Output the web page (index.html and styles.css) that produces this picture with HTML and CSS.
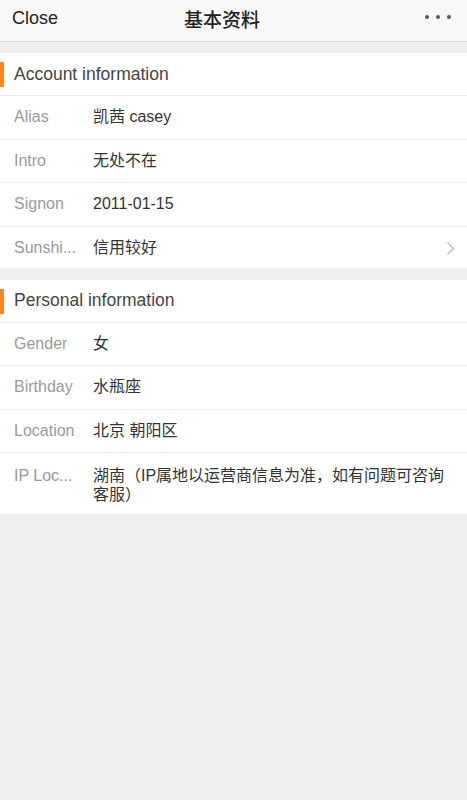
FILE: index.html
```html
<!DOCTYPE html>
<html>
<head>
    <title>基本资料</title>
    <link rel="stylesheet" href="styles.css">
</head>
<body>

    <div class="topbar">
        <span class="close">Close</span>
        <span class="title">基本资料</span>
        <span class="more"><i></i><i></i><i></i></span>
    </div>

    <div class="group">
        <div class="group-title">Account information</div>
        <div class="row">
            <span class="label">Alias</span>
            <span class="value">凯茜 casey</span>
        </div>
        <div class="row">
            <span class="label">Intro</span>
            <span class="value">无处不在</span>
        </div>
        <div class="row">
            <span class="label">Signon</span>
            <span class="value">2011-01-15</span>
        </div>
        <div class="row">
            <span class="label">Sunshi...</span>
            <span class="value">信用较好</span>
            <svg class="arrow" width="9" height="15" viewBox="0 0 9 15">
                <path d="M1.5 1.5 L7.5 7.5 L1.5 13.5" fill="none" stroke="#b8b8b8" stroke-width="1.3"/>
            </svg>
        </div>
    </div>

    <div class="group">
        <div class="group-title">Personal information</div>
        <div class="row">
            <span class="label">Gender</span>
            <span class="value">女</span>
        </div>
        <div class="row">
            <span class="label">Birthday</span>
            <span class="value">水瓶座</span>
        </div>
        <div class="row">
            <span class="label">Location</span>
            <span class="value">北京 朝阳区</span>
        </div>
        <div class="row tall">
            <span class="label">IP Loc...</span>
            <span class="value">湖南（IP属地以运营商信息为准，如有问题可咨询客服）</span>
        </div>
    </div>

</body>
</html>
```

FILE: styles.css
```css
body {
    font-family: "Liberation Sans", "Noto Sans CJK SC", sans-serif;
    margin: 0;
    background-color: #efefef;
    color: #333;
}

.topbar {
    height: 41px;
    display: flex;
    align-items: center;
    justify-content: space-between;
    padding: 0 12px;
    background: #f8f8f8;
    border-bottom: 1px solid #dcdcdc;
    position: relative;
}

.close {
    font-size: 18px;
    color: #222;
    margin-top: -4px;
}

/* title sits a bit left of the true centre in the app */
.title {
    position: absolute;
    left: 0;
    right: 23px;
    top: 5px;
    text-align: center;
    font-size: 19px;
    font-weight: 500;
    color: #222;
    pointer-events: none;
}

.more {
    display: flex;
    gap: 7px;
    margin-right: 4px;
    margin-top: -8px;
}

.more i {
    width: 4px;
    height: 4px;
    border-radius: 50%;
    background: #5a5a5a;
}

.group {
    background: white;
    margin-top: 11px;
}

.group + .group {
    margin-top: 12px;
}

.group-title {
    height: 42px;
    display: flex;
    align-items: center;
    padding-left: 14px;
    font-size: 17.5px;
    color: #444;
    position: relative;
    border-bottom: 1px solid #ebebeb;
}

.group-title::before {
    content: "";
    position: absolute;
    left: 0;
    top: 9px;
    width: 4px;
    height: 25px;
    background: #f5862a;
}

.row {
    display: flex;
    align-items: flex-start;
    padding: 11px 12px 11.5px 14px;
    border-bottom: 1px solid #ebebeb;
    font-size: 16px;
    line-height: 20px;
}

.row:last-child {
    border-bottom: none;
    padding-bottom: 10px;
}

.row.tall {
    padding-top: 13px;
}

.label {
    flex: 0 0 67px;
    margin-right: 12px;
    color: #9a9a9a;
    white-space: nowrap;
}

.value {
    flex: 1;
    color: #333;
    line-height: 18.5px;
    padding-top: 1px;
}

.arrow {
    margin-top: 3px;
}
```
